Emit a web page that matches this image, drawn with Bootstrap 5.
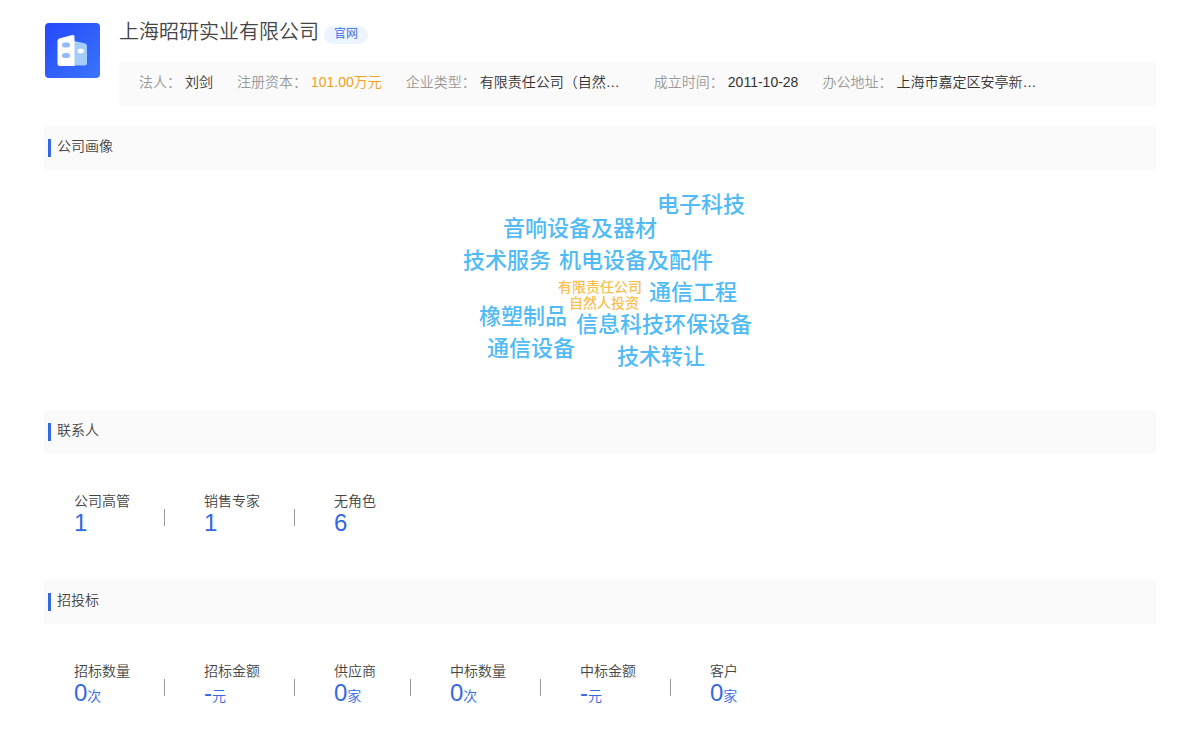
<!DOCTYPE html>
<html lang="zh-CN">
<head>
<meta charset="utf-8">
<meta name="viewport" content="width=device-width, initial-scale=1">
<title>上海昭研实业有限公司</title>
<link href="https://cdn.jsdelivr.net/npm/bootstrap@5.3.0/dist/css/bootstrap.min.css" rel="stylesheet">
<style>
  body { font-family: "Liberation Sans", "Noto Sans CJK SC", sans-serif; font-size: 14px; font-weight: 350; line-height: 20px; color: #444; }
  .page { padding: 22px 44px; }
  .logo { width: 56px; height: 56px; margin-top: 1px; }
  .company-head { gap: 19px; margin-bottom: 20px; }
  .company-name { font-size: 20px; font-weight: 350; line-height: 20px; }
  .name-row { gap: 5px; }
  .site-tag { font-size: 12px; line-height: 16px; padding: 0 10px 2px; margin-top: 4px; color: #2f6bea; background: #ebf4ff; }
  .facts { background: #fafafa; padding: 10px 20px 14px; column-gap: 24px; margin-top: 18px; }
  .facts dt { font-weight: 350; color: #999; margin-right: 4px; }
  .facts dd { color: #333; }
  .facts .clipped { min-width: 150px; }
  .facts .capital { color: #f0a020; }
  .block-title { background: #fafafa; padding: 10px 4px 14px; height: 44px; font-size: 14px; line-height: 20px; font-weight: 350; }
  .block-title::before { content: ""; width: 3px; height: 18px; margin: 3px 6px 0 0; background: #3468e2; }
  .cloud-area { height: 240px; }
  .cloud { width: 300px; height: 200px; }
  .cloud span { position: absolute; white-space: nowrap; font-size: 22px; line-height: 34px; font-weight: 500; color: #50bbf5; }
  .cloud .core { font-size: 14px; line-height: 16px; color: #f8c04e; }
  .figures { padding: 37px 30px 45px; }
  .figures li { padding-right: 34px; }
  .figures li + li { padding-left: 39px; }
  .figures li:not(:last-child) { padding-right: 35px; }
  .figures li:not(:last-child)::after { content: ""; align-self: flex-start; width: 1px; height: 17px; margin: 18px -35px 0 34px; background: #999; }
  .amount { font-size: 24px; line-height: 24px; color: #3468e2; }
  .unit { font-size: 14px; line-height: 1; }
</style>
</head>
<body>
<main class="page">
  <header class="company-head d-flex align-items-start">
    <svg class="logo flex-shrink-0" viewBox="0 0 56 56" aria-hidden="true">
      <defs><linearGradient id="tile" x1="0" y1="0" x2="1" y2="1"><stop offset="0" stop-color="#2448fb"/><stop offset="1" stop-color="#3a75fb"/></linearGradient></defs>
      <rect x="1" y="0" width="55" height="55" rx="4" fill="url(#tile)"/>
      <path d="M30 18 40.500 20.200Q43 21 43 23V40Q43 42.500 40.500 42.500H30Z" fill="#a5cdfc"/>
      <path d="M16 15.200 28.500 12Q30.500 11.500 30.500 13.500V43H16Q13.500 43 13.500 40.500V18Q13.500 15.800 16 15.200Z" fill="#fff"/>
      <rect x="18" y="19.500" width="8" height="5" rx="2.500" fill="#93b9f8"/>
      <rect x="18" y="30" width="8" height="5" rx="2.500" fill="#93b9f8"/>
      <rect x="33.500" y="25.800" width="6.500" height="4.500" rx="2.200" fill="#fff"/>
    </svg>
    <div class="flex-grow-1">
      <div class="name-row d-flex align-items-start">
        <h1 class="company-name mb-0">上海昭研实业有限公司</h1>
        <a class="site-tag rounded-pill text-decoration-none" href="#">官网</a>
      </div>
      <dl class="facts d-flex flex-wrap mb-0">
        <div class="d-flex"><dt>法人：</dt><dd class="mb-0">刘剑</dd></div>
        <div class="d-flex"><dt>注册资本：</dt><dd class="capital mb-0">101.00万元</dd></div>
        <div class="d-flex"><dt>企业类型：</dt><dd class="clipped mb-0">有限责任公司（自然…</dd></div>
        <div class="d-flex"><dt>成立时间：</dt><dd class="mb-0">2011-10-28</dd></div>
        <div class="d-flex"><dt>办公地址：</dt><dd class="clipped mb-0">上海市嘉定区安亭新…</dd></div>
      </dl>
    </div>
  </header>

  <section>
    <h2 class="block-title d-flex mb-0">公司画像</h2>
    <div class="cloud-area d-flex justify-content-center">
      <div class="cloud position-relative">
        <span style="left:207px;top:18px">电子科技</span>
        <span style="left:53px;top:42px">音响设备及器材</span>
        <span style="left:13px;top:74px">技术服务</span>
        <span style="left:109px;top:74px">机电设备及配件</span>
        <span class="core" style="left:108px;top:109px">有限责任公司</span>
        <span class="core" style="left:119px;top:125px">自然人投资</span>
        <span style="left:199px;top:106px">通信工程</span>
        <span style="left:29px;top:130px">橡塑制品</span>
        <span style="left:126px;top:138px">信息科技</span>
        <span style="left:214px;top:138px">环保设备</span>
        <span style="left:37px;top:162px">通信设备</span>
        <span style="left:167px;top:170px">技术转让</span>
      </div>
    </div>
  </section>

  <section>
    <h2 class="block-title d-flex mb-0">联系人</h2>
    <ul class="figures list-unstyled d-flex flex-wrap mb-0">
      <li class="d-flex"><div>公司高管<div class="amount">1</div></div></li>
      <li class="d-flex"><div>销售专家<div class="amount">1</div></div></li>
      <li class="d-flex"><div>无角色<div class="amount">6</div></div></li>
    </ul>
  </section>

  <section>
    <h2 class="block-title d-flex mb-0">招投标</h2>
    <ul class="figures list-unstyled d-flex flex-wrap mb-0">
      <li class="d-flex"><div>招标数量<div class="amount">0<span class="unit">次</span></div></div></li>
      <li class="d-flex"><div>招标金额<div class="amount">-<span class="unit">元</span></div></div></li>
      <li class="d-flex"><div>供应商<div class="amount">0<span class="unit">家</span></div></div></li>
      <li class="d-flex"><div>中标数量<div class="amount">0<span class="unit">次</span></div></div></li>
      <li class="d-flex"><div>中标金额<div class="amount">-<span class="unit">元</span></div></div></li>
      <li class="d-flex"><div>客户<div class="amount">0<span class="unit">家</span></div></div></li>
    </ul>
  </section>
</main>
<script src="https://cdn.jsdelivr.net/npm/bootstrap@5.3.0/dist/js/bootstrap.bundle.min.js"></script>
</body>
</html>
